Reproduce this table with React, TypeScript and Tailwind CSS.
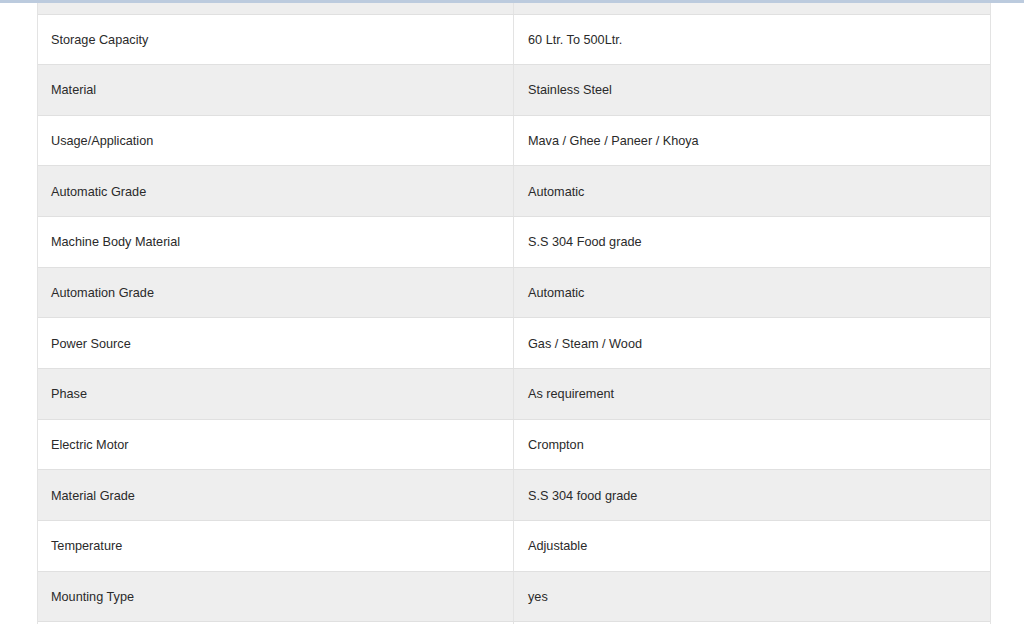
import React from 'react';

const specs: [string, string][] = [
  ['Storage Capacity', '60 Ltr. To 500Ltr.'],
  ['Material', 'Stainless Steel'],
  ['Usage/Application', 'Mava / Ghee / Paneer / Khoya'],
  ['Automatic Grade', 'Automatic'],
  ['Machine Body Material', 'S.S 304 Food grade'],
  ['Automation Grade', 'Automatic'],
  ['Power Source', 'Gas / Steam / Wood'],
  ['Phase', 'As requirement'],
  ['Electric Motor', 'Crompton'],
  ['Material Grade', 'S.S 304 food grade'],
  ['Temperature', 'Adjustable'],
  ['Mounting Type', 'yes'],
];

export default function App() {
  return (
    <div className="w-[1024px] h-[624px] overflow-hidden bg-white font-['Liberation_Sans',Arial,sans-serif] text-[12.7px] text-[#2a2a2a]">
      {/* top strip */}
      <div className="h-[3px] bg-[#bccbde]" />

      <div className="ml-[37px] w-[954px] border-x border-[#e3e3e3]">
        {/* partially visible row above */}
        <div className="flex h-[11.5px] bg-[#eeeeee] border-b border-[#e0e0e0]">
          <div className="w-[476px] border-r border-[#e3e3e3]" />
          <div className="flex-1" />
        </div>

        {specs.map(([label, value], i) => (
          <div
            key={label}
            className={`flex h-[50.67px] items-center border-b border-[#e0e0e0] ${i % 2 === 1 ? 'bg-[#eeeeee]' : 'bg-white'}`}
          >
            <div className="w-[476px] h-full flex items-center pl-[13px] pt-[2px] border-r border-[#e3e3e3]">
              {label}
            </div>
            <div className="flex-1 h-full flex items-center pl-[14px] pt-[2px]">{value}</div>
          </div>
        ))}

        {/* next row, cut off */}
        <div className="flex h-[20px] bg-white">
          <div className="w-[476px] border-r border-[#e3e3e3]" />
          <div className="flex-1" />
        </div>
      </div>
    </div>
  );
}
